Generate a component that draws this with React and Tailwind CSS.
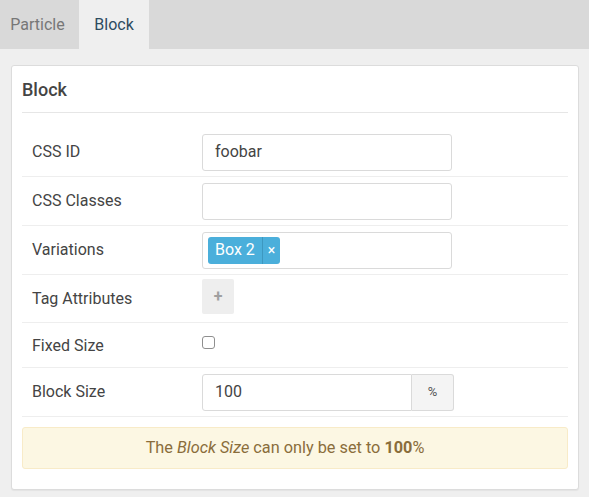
import React from "react";

function Row({ label, h, children, labelClass = "" }) {
  return (
    <div className={`flex items-center border-b border-[#eeeeee] ${h}`}>
      <div className={`w-[180px] pl-[10px] text-[16px] text-[#444] ${labelClass}`}>{label}</div>
      <div className="flex items-center">{children}</div>
    </div>
  );
}

export default function App() {
  return (
    <div className="w-[589px] h-[497px] bg-[#efefef] font-['Roboto',sans-serif] overflow-hidden">
      <div className="flex h-[49px] bg-[#d9d9d9]">
        <div className="w-[75px] flex items-center justify-center text-[16px] text-[#777]">Particle</div>
        <div className="ml-[4px] w-[70px] flex items-center justify-center text-[16px] text-[#2d4b5f] bg-[#efefef]">Block</div>
      </div>
      <div className="pt-[16px] pl-[11px] pr-[10px]">
        <div className="bg-white border border-[#dcdcdc] rounded-[3px] px-[10px] pb-[20px] shadow-[0_1px_1px_rgba(0,0,0,0.05)]">
          <div className="h-[47px] flex items-center border-b border-[#e6e6e6] text-[18px] text-[#444] font-medium">Block</div>
          <div className="mt-[15px]">
            <Row label="CSS ID" h="h-[49px]">
              <div className="w-[250px] h-[37px] border border-[#dadada] rounded-[3px] flex items-center px-[12px] text-[16px] text-[#444]">foobar</div>
            </Row>
            <Row label="CSS Classes" h="h-[49px]">
              <div className="w-[250px] h-[37px] border border-[#dadada] rounded-[3px]"></div>
            </Row>
            <Row label="Variations" h="h-[49px]">
              <div className="w-[250px] h-[37px] border border-[#dadada] rounded-[3px] flex items-center px-[5px]">
                <div className="flex items-center h-[27px] bg-[#4bafdb] rounded-[3px] text-white">
                  <span className="px-[7px] text-[16px]">Box 2</span>
                  <span className="h-full border-l border-[#3d98c0] px-[5px] flex items-center text-[14px]">×</span>
                </div>
              </div>
            </Row>
            <Row label="Tag Attributes" h="h-[48px]">
              <div className="w-[32px] h-[35px] bg-[#eeeeee] rounded-[2px] flex items-center justify-center text-[#a0a0a0] text-[16px] font-bold mt-[-4px]">+</div>
            </Row>
            <Row label="Fixed Size" h="h-[45px]" labelClass="pt-[2px]">
              <div className="w-[13px] h-[13px] border border-[#8f8f8f] rounded-[3px] bg-white mt-[-6px]"></div>
            </Row>
            <Row label="Block Size" h="h-[49px]">
              <div className="flex h-[37px]">
                <div className="w-[210px] border border-[#dadada] rounded-l-[3px] flex items-center px-[12px] text-[16px] text-[#444]">100</div>
                <div className="w-[42px] border border-l-0 border-[#dadada] rounded-r-[3px] bg-[#f4f4f4] flex items-center justify-center text-[13px] text-[#555]">%</div>
              </div>
            </Row>
          </div>
          <div className="mt-[10px] h-[42px] bg-[#fcf7e3] border border-[#f8ebc8] rounded-[3px] flex items-center justify-center pr-[20px] text-[16.3px] text-[#8a6d3b]">
            <span>The <i>Block Size</i> can only be set to <b>100</b>%</span>
          </div>
        </div>
      </div>
    </div>
  );
}
